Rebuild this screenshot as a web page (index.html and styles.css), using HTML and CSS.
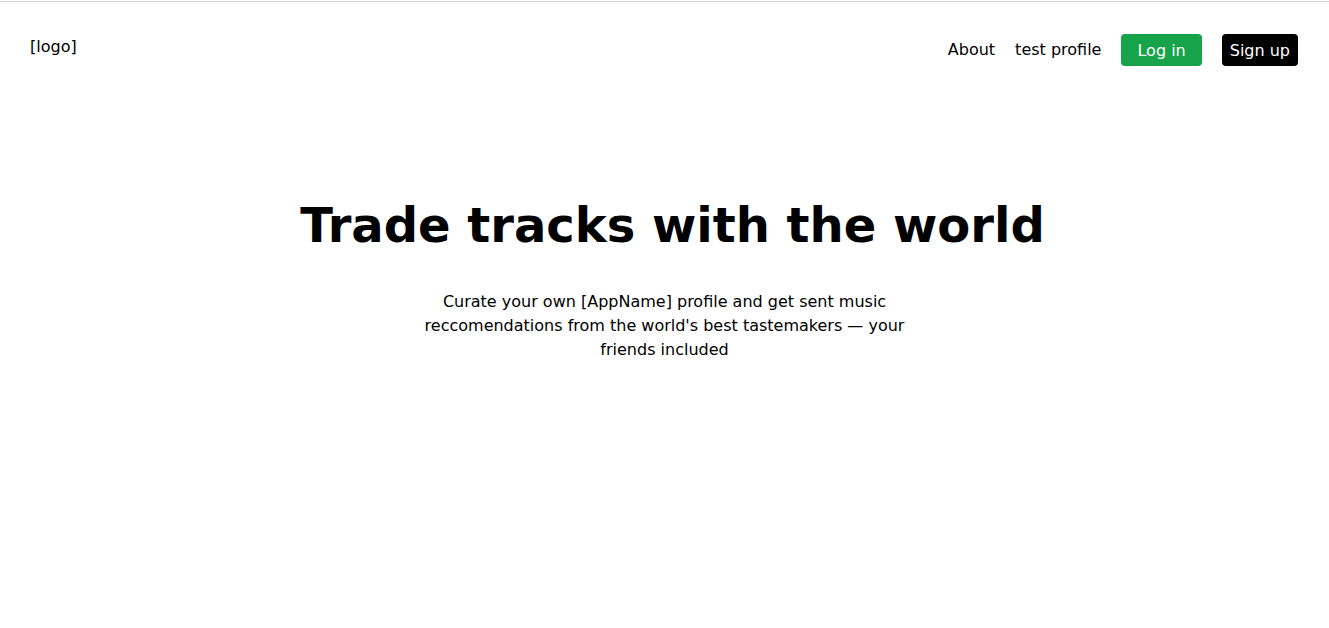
FILE: index.html
```html
<!DOCTYPE html>
<html lang="en">
<head>
<meta charset="utf-8">
<title>[AppName]</title>
<link rel="stylesheet" href="styles.css">
</head>
<body>
<div class="page">
  <header class="site-header">
    <div class="logo">[logo]</div>
    <nav class="nav">
      <a class="nav-link" href="#">About</a>
      <a class="nav-link" href="#">test profile</a>
      <a class="btn btn-login" href="#">Log in</a>
      <a class="btn btn-signup" href="#">Sign up</a>
    </nav>
  </header>
  <main class="hero">
    <h1 class="hero-title">Trade tracks with the world</h1>
    <p class="hero-text">Curate your own [AppName] profile and get sent music reccomendations from the world's best tastemakers — your friends included</p>
  </main>
</div>
</body>
</html>
```
FILE: styles.css
```css
html, body {
  margin: 0;
  padding: 0;
  background: #ffffff;
}
body {
  font-family: "DejaVu Sans", sans-serif;
  font-size: 16px;
  line-height: 24px;
  color: #000000;
}
.page {
  margin-top: 1px;
  border-top: 1px solid #d6d0cc;
}
.site-header {
  display: flex;
  justify-content: space-between;
  align-items: flex-start;
  padding: 32px 31px 0 30px;
}
.logo {
  line-height: 24px;
  padding-top: 1px;
}
.nav {
  display: flex;
  align-items: center;
  gap: 20px;
  margin-top: -1px;
}
.nav-link {
  color: #000000;
  text-decoration: none;
  line-height: 32px;
  padding-top: 1px;
}
.btn {
  display: block;
  text-decoration: none;
  color: #ffffff;
  border-radius: 4px;
  padding: 5px 16px 3px;
  line-height: 24px;
}
.btn-login {
  background: #16a34a;
}
.btn-signup {
  background: #000000;
  padding: 5px 8px 3px;
}
.hero {
  display: flex;
  flex-direction: column;
  align-items: center;
  padding-top: 135px;
  text-align: center;
}
.hero-title {
  margin: 0;
  padding-left: 16px;
  font-size: 48px;
  line-height: 48px;
  font-weight: bold;
}
.hero-text {
  margin: 41px 0 0;
  max-width: 480px;
}
```
